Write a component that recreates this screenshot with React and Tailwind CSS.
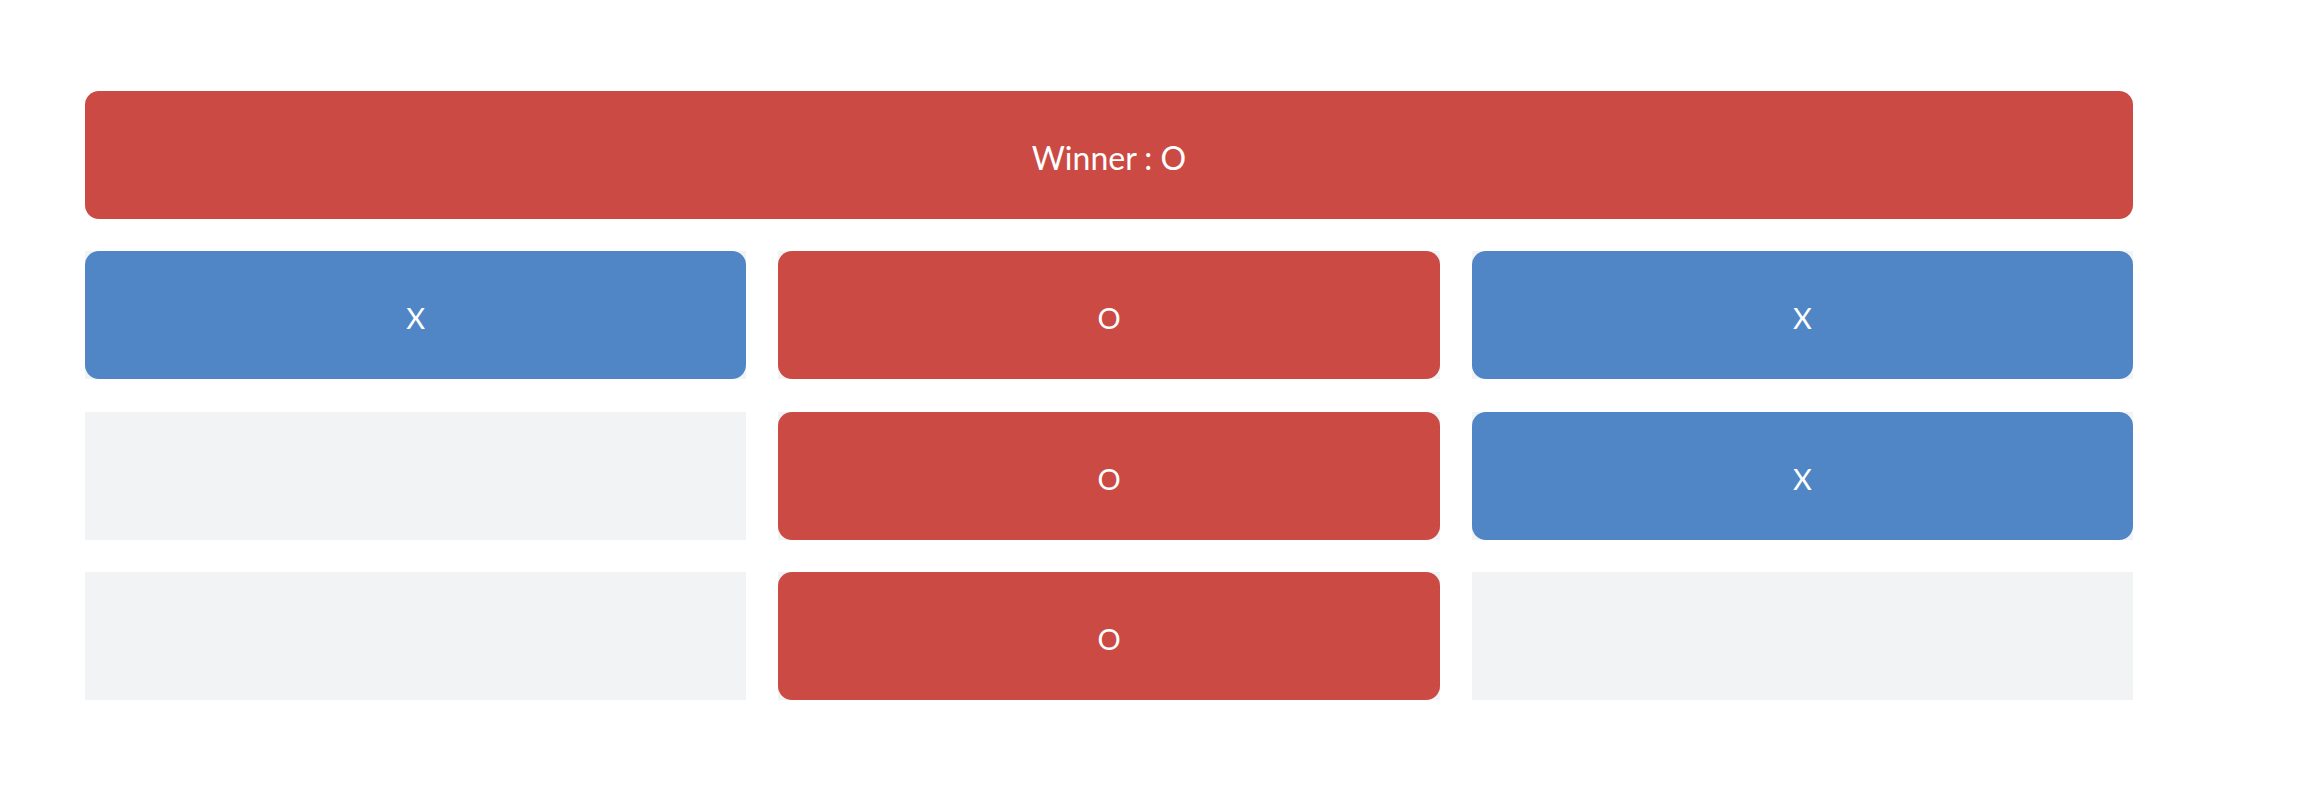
const board = ['X', 'O', 'X', null, 'O', 'X', null, 'O', null]

const Cell = ({ value }) => (
  <div className="h-[128px] bg-[#f2f3f5]">
    {value && (
      <button
        className={`flex h-full w-full items-center justify-center rounded-[14px] pt-[6px] text-[29px] text-white ${
          value === 'X' ? 'bg-[#5086c6]' : 'bg-[#cb4a44]'
        }`}
      >
        {value}
      </button>
    )}
  </div>
)

export default function App() {
  return (
    <div className="min-h-[798px] bg-white pl-[85px] pt-[91px] font-['Lato',sans-serif]">
      <div className="w-[2048px]">
        <div className="flex h-[128px] items-center justify-center rounded-[14px] bg-[#cb4a44] pt-[6px] text-[32px] text-white">
          Winner : O
        </div>
        <div className="mt-8 grid grid-cols-3 gap-x-8 gap-y-[32.5px]">
          {board.map((v, i) => (
            <Cell key={i} value={v} />
          ))}
        </div>
      </div>
    </div>
  )
}
